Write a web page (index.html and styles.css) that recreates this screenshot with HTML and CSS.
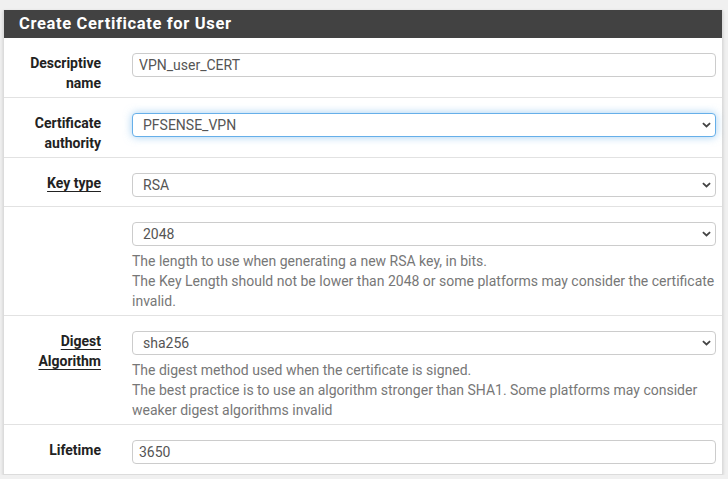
FILE: index.html
```html
<!DOCTYPE html>
<html>
<head>
<meta charset="utf-8">
<link rel="stylesheet" href="styles.css">
</head>
<body>
<div class="panel">
  <div class="panel-heading">Create Certificate for User</div>
  <div class="panel-body">
    <div class="row">
      <div class="lbl"><span>Descriptive name</span></div>
      <div class="ctl"><input class="field" type="text" value="VPN_user_CERT"></div>
    </div>
    <div class="row">
      <div class="lbl"><span>Certificate authority</span></div>
      <div class="ctl">
        <div class="sel focus"><select><option>PFSENSE_VPN</option></select>
          <svg class="chev" viewBox="0 0 10 6"><path d="M1 1 L5 4.6 L9 1" fill="none" stroke="#444" stroke-width="2"/></svg></div>
      </div>
    </div>
    <div class="row">
      <div class="lbl"><span class="req">Key type</span></div>
      <div class="ctl">
        <div class="sel"><select><option>RSA</option></select>
          <svg class="chev" viewBox="0 0 10 6"><path d="M1 1 L5 4.6 L9 1" fill="none" stroke="#444" stroke-width="2"/></svg></div>
      </div>
    </div>
    <div class="row">
      <div class="lbl"></div>
      <div class="ctl">
        <div class="sel"><select><option>2048</option></select>
          <svg class="chev" viewBox="0 0 10 6"><path d="M1 1 L5 4.6 L9 1" fill="none" stroke="#444" stroke-width="2"/></svg></div>
        <div class="help">The length to use when generating a new RSA key, in bits.<br>The Key Length should not be lower than 2048 or some platforms may consider the certificate invalid.</div>
      </div>
    </div>
    <div class="row">
      <div class="lbl"><span class="req">Digest Algorithm</span></div>
      <div class="ctl">
        <div class="sel"><select><option>sha256</option></select>
          <svg class="chev" viewBox="0 0 10 6"><path d="M1 1 L5 4.6 L9 1" fill="none" stroke="#444" stroke-width="2"/></svg></div>
        <div class="help">The digest method used when the certificate is signed.<br>The best practice is to use an algorithm stronger than SHA1. Some platforms may consider weaker digest algorithms invalid</div>
      </div>
    </div>
    <div class="row last">
      <div class="lbl"><span>Lifetime</span></div>
      <div class="ctl"><input class="field" type="text" value="3650"></div>
    </div>
  </div>
</div>
</body>
</html>
```
FILE: styles.css
```css
html, body {
  margin: 0;
  padding: 0;
  background: #f0f0f0;
  font-family: Roboto, "Liberation Sans", sans-serif;
  font-size: 14px;
}
.panel {
  margin: 10px 5px 0 3px;
  background: #fff;
  border: 1px solid #dcdcdc;
  border-top: none;
  box-shadow: 0 1px 3px rgba(0,0,0,0.15);
}
.panel-heading {
  background: #424242;
  color: #fff;
  font-weight: bold;
  font-size: 16.5px;
  height: 28px;
  line-height: 28px;
  padding-left: 15px;
  letter-spacing: 0.65px;
}
.row {
  display: grid;
  grid-template-columns: 128px 1fr;
  padding: 15px 0 4px;
  border-bottom: 1px solid #e2e2e2;
}
.row.last {
  border-bottom: none;
  padding-bottom: 5px;
}
.lbl {
  text-align: right;
  padding: 0 31px 0 15px;
  font-weight: bold;
  color: #222;
  line-height: 20px;
}
.req {
  text-decoration: underline;
  text-underline-offset: 3px;
}
.ctl {
  padding-right: 6px;
}
.field {
  display: block;
  box-sizing: border-box;
  width: 100%;
  height: 24px;
  margin: 0 0 5px;
  padding: 2px 6px;
  border: 1px solid #ccc;
  border-radius: 4px;
  font-family: Roboto, "Liberation Sans", sans-serif;
  font-size: 14px;
  color: #555;
  background: #fff;
  outline: none;
}
.sel {
  position: relative;
  margin-bottom: 5px;
}
.sel select {
  display: block;
  box-sizing: border-box;
  width: 100%;
  height: 24px;
  margin: 0;
  padding: 0 20px 0 10px;
  border: 1px solid #ccc;
  border-radius: 4px;
  font-family: Roboto, "Liberation Sans", sans-serif;
  font-size: 14px;
  color: #555;
  background: #fff;
  -webkit-appearance: none;
  appearance: none;
  outline: none;
}
.sel.focus select {
  border-color: #66afe9;
  box-shadow: 0 0 8px rgba(102,175,233,0.6);
}
.chev {
  position: absolute;
  right: 5px;
  top: 9px;
  width: 9px;
  height: 6px;
  pointer-events: none;
}
.help {
  color: #777;
  line-height: 20px;
}
```
